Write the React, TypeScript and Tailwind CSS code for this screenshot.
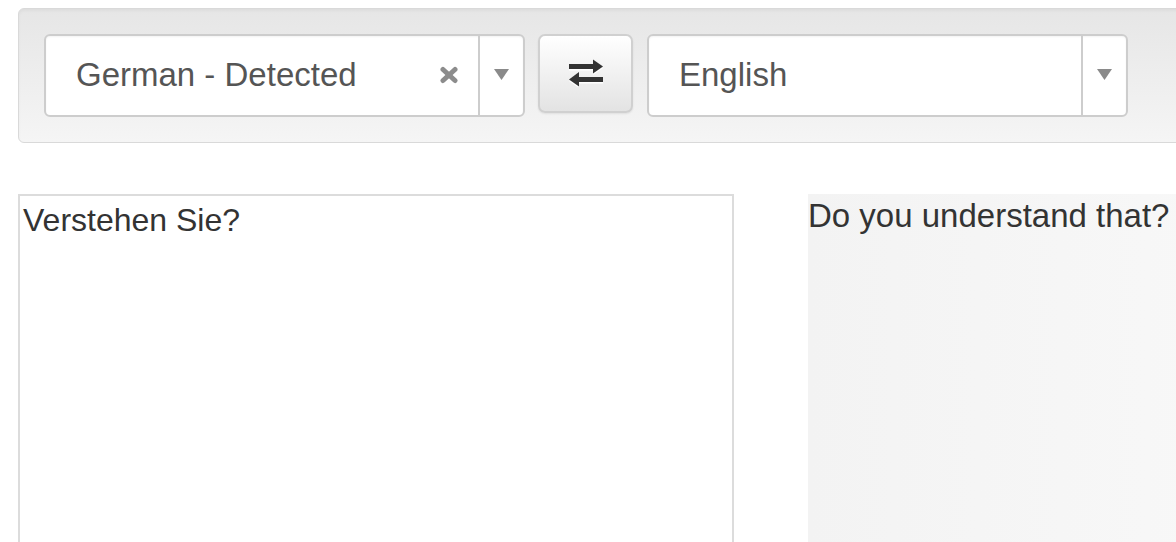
const font = { fontFamily: '"Liberation Sans", Arial, sans-serif' };

function Caret() {
  return (
    <svg width="15" height="11" viewBox="0 0 15 11">
      <polygon points="0,0 15,0 7.5,11" fill="#8a8a8a" />
    </svg>
  );
}

function ClearIcon() {
  return (
    <svg width="20" height="18" viewBox="0 0 20 18">
      <line x1="4" y1="3.5" x2="16" y2="14.5" stroke="#8c8c8c" strokeWidth="5" strokeLinecap="round" />
      <line x1="16" y1="3.5" x2="4" y2="14.5" stroke="#8c8c8c" strokeWidth="5" strokeLinecap="round" />
    </svg>
  );
}

function SwapIcon() {
  return (
    <svg width="36" height="28" viewBox="0 0 36 28">
      <g fill="#ffffff" transform="translate(0 1.5)">
        <rect x="1" y="5" width="26" height="5" />
        <polygon points="25,0.5 35,7.5 25,14.5" />
        <rect x="9" y="18" width="26" height="5" />
        <polygon points="11,13 1,20.5 11,27.5" />
      </g>
      <g fill="#333333">
        <rect x="1" y="5" width="26" height="5" />
        <polygon points="25,0.5 35,7.5 25,14.5" />
        <rect x="9" y="18" width="26" height="5" />
        <polygon points="11,13 1,20.5 11,27.5" />
      </g>
    </svg>
  );
}

function LangSelect({ label, clearable }: { label: string; clearable?: boolean }) {
  return (
    <div className="flex h-[83px] w-[481px] shrink-0 rounded-[6px] border-2 border-[#cdcdcd] bg-white shadow-[inset_0_1px_2px_rgba(0,0,0,0.05)]">
      <div className="flex flex-1 items-center pl-[30px] pr-[19px] pb-[1px]">
        <span className="flex-1 text-[33px] leading-[36px] text-[#555]">{label}</span>
        {clearable && (
          <span className="flex pb-[1px]">
            <ClearIcon />
          </span>
        )}
      </div>
      <div className="flex w-[45px] items-center justify-center border-l-2 border-[#cdcdcd] pb-[2px]">
        <Caret />
      </div>
    </div>
  );
}

export default function App() {
  return (
    <div className="h-[542px] w-[1176px] overflow-hidden bg-white pl-[18px] pt-[8px]" style={font}>
      <div className="flex w-[1200px] rounded-[6px] border border-[#d9d9d9] bg-gradient-to-b from-[#e6e6e6] to-[#f5f5f5] pt-[25px] pb-[25px] pl-[25px] shadow-[inset_0_2px_3px_rgba(0,0,0,0.04)]">
        <LangSelect label="German - Detected" clearable />
        <button className="ml-[13px] flex h-[79px] w-[95px] shrink-0 items-center justify-center rounded-[7px] border-2 border-[#d0d0d0] bg-gradient-to-b from-white to-[#e3e3e3] shadow-[0_1px_2px_rgba(0,0,0,0.08)]">
          <span className="flex pb-[1px]">
            <SwapIcon />
          </span>
        </button>
        <div className="ml-[14px]">
          <LangSelect label="English" />
        </div>
      </div>

      <div className="mt-[51px] flex">
        <div className="h-[400px] w-[716px] shrink-0 border-2 border-[#dcdcdc] bg-white pl-[3px] pt-[6px] text-[32px] leading-[36px] text-[#333]">
          Verstehen Sie?
        </div>
        <div className="ml-[74px] h-[400px] w-[420px] shrink-0 bg-gradient-to-r from-[#f3f3f3] to-[#f8f8f8] pt-[4px] text-[33px] leading-[36px] text-[#333]">
          Do you understand that?
        </div>
      </div>
    </div>
  );
}
